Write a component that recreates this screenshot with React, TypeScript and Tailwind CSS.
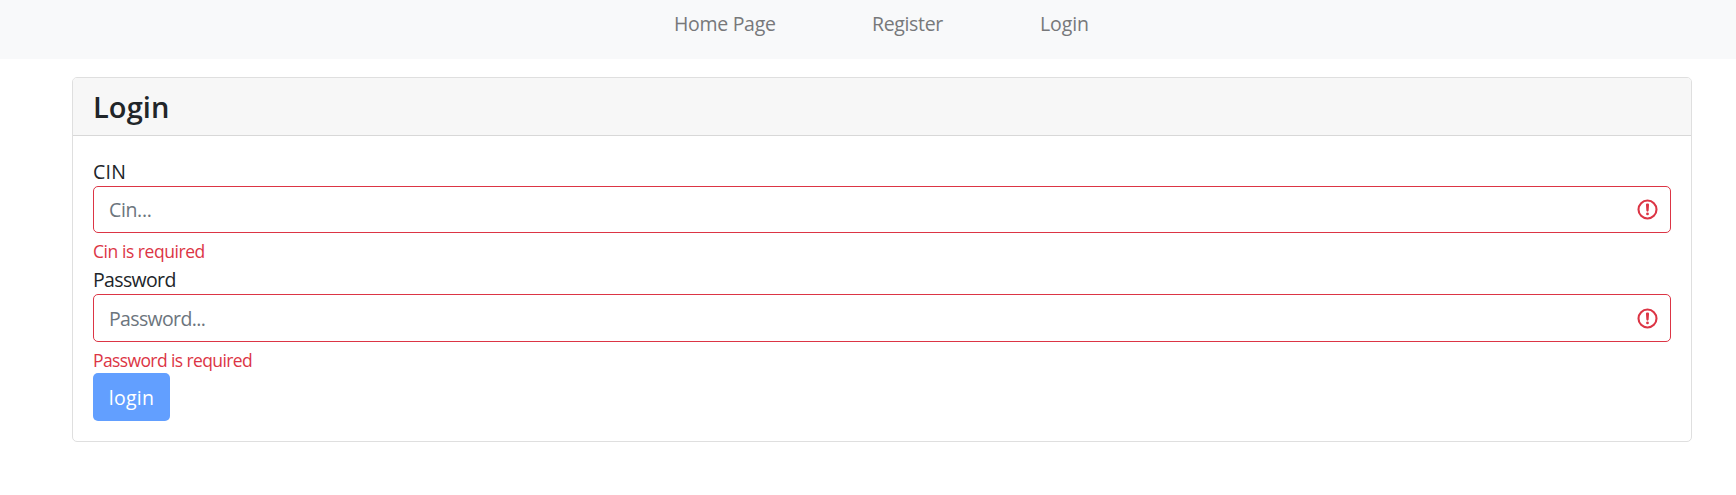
import React from "react";

function InvalidIcon({ className }: { className: string }) {
  return (
    <svg
      viewBox="0.25 0.25 12 12"
      className={`pointer-events-none absolute right-[11px] h-[24px] w-[24px] ${className}`}
      fill="none"
      stroke="#dc3545"
    >
      <circle cx="6" cy="6" r="4.5" strokeWidth="1.05" />
      <path strokeLinejoin="round" strokeWidth="1.15" d="M5.8 3.6h.4L6 6.5z" />
      <circle cx="6" cy="8.2" r=".7" fill="#dc3545" stroke="none" />
    </svg>
  );
}

type FieldProps = {
  id: string;
  type: string;
  placeholder: string;
  className: string;
  iconClassName: string;
};

function Field({ id, type, placeholder, className, iconClassName }: FieldProps) {
  return (
    <div className={`relative ${className}`}>
      <input
        id={id}
        type={type}
        placeholder={placeholder}
        className="block h-full w-full rounded-[5px] border border-[#dc3545] bg-white px-[15px] text-[#212529] outline-none placeholder:text-[#6c757d]"
      />
      <InvalidIcon className={iconClassName} />
    </div>
  );
}

export default function App() {
  return (
    <div className="min-h-[495px] bg-white font-['Open_Sans','Noto_Sans',sans-serif] text-[19.5px] leading-[30px] text-[#212529]">
      <nav className="flex h-[59px] bg-[#f8f9fa] pl-[674px] pt-[9px] text-[#77787a]">
        <a className="w-[198px] tracking-[-0.3px]">Home Page</a>
        <a className="w-[168px] tracking-[-0.35px]">Register</a>
        <a className="tracking-[-0.1px]">Login</a>
      </nav>

      <main className="ml-[72px] mt-[18px] h-[365px] w-[1620px] rounded-[5px] border border-[#dfdfdf]">
        <header className="h-[58px] rounded-t-[4px] border-b border-[#d8d8d8] bg-[#f7f7f7] px-[20px] pt-[9px]">
          <h4 className="text-[29px] font-semibold leading-[40px] tracking-[0.1px]">Login</h4>
        </header>
        <form className="flex flex-col items-start px-[20px] pt-[20px]">
          <label htmlFor="cin" className="h-[30px] pt-[1px] tracking-[0.2px]">CIN</label>
          <Field
            id="cin"
            type="text"
            placeholder="Cin..."
            className="h-[47px] w-full tracking-[-0.35px]"
            iconClassName="top-[12px]"
          />
          <p className="mt-[4px] h-[27px] text-[17.5px] leading-[28px] tracking-[-0.45px] text-[#dc3545]">
            Cin is required
          </p>
          <label htmlFor="password" className="h-[30px] pt-[1px] tracking-[-0.65px]">Password</label>
          <Field
            id="password"
            type="password"
            placeholder="Password..."
            className="h-[48px] w-full tracking-[-0.65px]"
            iconClassName="top-[13px]"
          />
          <p className="mt-[4px] h-[27px] text-[17.5px] leading-[28px] tracking-[-0.61px] text-[#dc3545]">
            Password is required
          </p>
          <button
            type="button"
            className="h-[48px] w-[77px] rounded-[5px] bg-[#629fff] pt-[2px] text-white tracking-[0.3px]"
          >
            login
          </button>
        </form>
      </main>
    </div>
  );
}
